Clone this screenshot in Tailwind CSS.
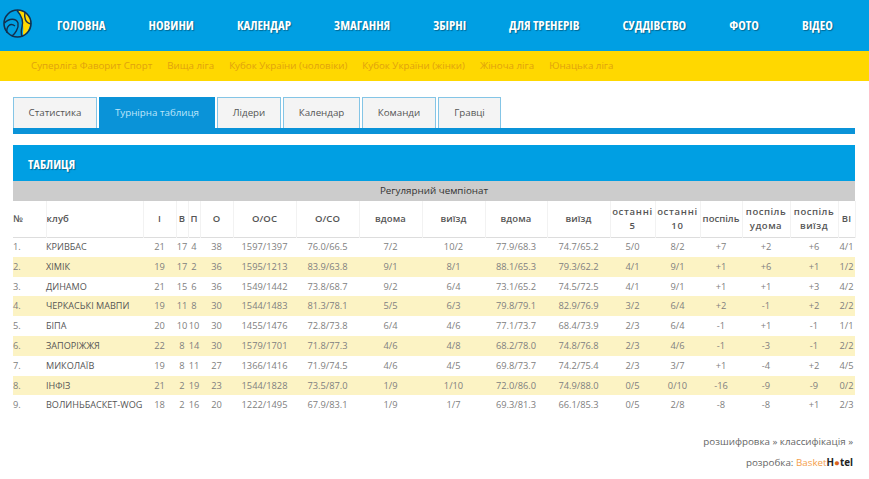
<!DOCTYPE html>
<html lang="uk">
<head>
    <meta charset="UTF-8">
    <title>Турнірна таблиця</title>
    <script src="https://cdn.jsdelivr.net/npm/@tailwindcss/browser@4"></script>
</head>
<body class="bg-white font-['Open_Sans',sans-serif] overflow-hidden">
    <!-- Main nav -->
    <header class="h-[51px] bg-[#009fe3] flex items-center relative">
        <svg class="absolute left-[3px] top-[9px] w-[29px] h-[29px]" viewBox="0 0 29 29">
            <path d="M15 1 C21 2 26 5 27 10 C28 16 26 23 20 27 C20 22 21 17 19 11 C18 7 16 4 15 1Z" fill="#ffd800"/>
            <circle cx="14.5" cy="14.5" r="13.5" fill="none" stroke="#12304f" stroke-width="1.6"/>
            <path d="M1.5 14 C6 9 13 9 15 14 C16 19 12 25 9 27 M4 24 C3 18 7 13 12 17 M14 1.5 C18 6 21 11 19 18 C18 22 18 25 19 27.5 M22 3 C21 8 22 14 28 15" fill="none" stroke="#12304f" stroke-width="1.4"/>
        </svg>
        <nav class="flex gap-[43px] pl-[57px] text-white font-bold text-[12.8px] [font-stretch:75%] [text-shadow:1px_1px_1px_rgba(0,0,0,0.35)] whitespace-nowrap">
            <a>ГОЛОВНА</a><a>НОВИНИ</a><a>КАЛЕНДАР</a><a>ЗМАГАННЯ</a><a>ЗБІРНІ</a><a>ДЛЯ ТРЕНЕРІВ</a><a>СУДДІВСТВО</a><a>ФОТО</a><a>ВІДЕО</a>
        </nav>
    </header>

    <!-- Sub nav -->
    <div class="h-[30px] bg-[#ffd800] flex items-center gap-[15px] pl-[31px] text-[9.75px] text-[#dfa20e] whitespace-nowrap">
        <a>Суперліга Фаворит Спорт</a><a>Вища ліга</a><a>Кубок України (чоловіки)</a><a>Кубок України (жінки)</a><a>Жіноча ліга</a><a>Юнацька ліга</a>
    </div>

    <main class="px-[13px] w-[855px] box-content pr-0">
        <!-- Tabs -->
        <div class="flex gap-[2px] mt-4 h-[31px] text-[9.75px] text-[#555] [&>a]:pt-[1px]">
            <a class="w-[84px] flex items-center justify-center bg-[#f4f4f4] border border-b-0 border-[#84c5e6]">Статистика</a>
            <a class="w-[116px] flex items-center justify-center bg-[#0a93d8] text-[#bfe6fa]">Турнірна таблиця</a>
            <a class="w-[64px] flex items-center justify-center bg-[#f4f4f4] border border-b-0 border-[#84c5e6]">Лідери</a>
            <a class="w-[77px] flex items-center justify-center bg-[#f4f4f4] border border-b-0 border-[#84c5e6]">Календар</a>
            <a class="w-[74px] flex items-center justify-center bg-[#f4f4f4] border border-b-0 border-[#84c5e6]">Команди</a>
            <a class="w-[63px] flex items-center justify-center bg-[#f4f4f4] border border-b-0 border-[#84c5e6]">Гравці</a>
        </div>
        <div class="h-[6px] w-[842px] bg-[#0a93d8]"></div>

        <!-- Table -->
        <div class="w-[842px] mt-[11px]">
            <h2 class="h-[36px] bg-[#009fe3] flex items-center pl-[15px] pt-[4px] text-white font-bold text-[12.5px] [font-stretch:75%] [text-shadow:1px_1px_1px_rgba(0,0,0,0.35)]">ТАБЛИЦЯ</h2>
            <div class="h-[20px] bg-[#cccccc] flex items-center justify-center text-[9.8px] text-[#333]">Регулярний чемпіонат</div>
            <table class="table-fixed w-[842px] border-collapse text-[9.3px] text-[#808080] text-center">
                <colgroup>
                    <col class="w-[33px]"><col class="w-[97px]"><col class="w-[33px]"><col class="w-[12px]"><col class="w-[12px]"><col class="w-[33px]"><col class="w-[63px]"><col class="w-[63px]"><col class="w-[63px]"><col class="w-[63px]"><col class="w-[62px]"><col class="w-[63px]"><col class="w-[45px]"><col class="w-[45px]"><col class="w-[42px]"><col class="w-[48px]"><col class="w-[48px]"><col class="w-[17px]">
                </colgroup>
                <thead class="text-[#555] text-[9.5px] tracking-[0.1px] leading-[14px]">
                    <tr class="h-[36px] border-b border-[#ddd] [&>th]:border-r [&>th]:border-[#f2f2f2] [&>th]:font-semibold [&>th]:p-0 [&>th]:overflow-hidden">
                        <th class="text-left">№</th><th class="text-left">клуб</th><th>І</th><th>В</th><th>П</th><th>О</th><th>О/ОС</th><th>О/СО</th><th>вдома</th><th>виїзд</th><th>вдома</th><th>виїзд</th><th class="tracking-[0.7px]">останні 5</th><th class="tracking-[0.7px]">останні 10</th><th class="tracking-[0px]">поспіль</th><th class="tracking-[0.5px]">поспіль удома</th><th class="tracking-[0.5px]">поспіль виїзд</th><th>ВІ</th>
                    </tr>
                </thead>
                <tbody class="[&>tr]:h-[19.8px] [&_td]:p-0 [&_td]:whitespace-nowrap [&_td:nth-child(1)]:text-left [&_td:nth-child(2)]:text-left [&_td:nth-child(2)]:text-[#555] [&_td:nth-child(2)]:text-[9.1px] [&>tr:nth-child(even)]:bg-[#fcf3c4]">
                    <tr><td>1.</td><td>КРИВБАС</td><td>21</td><td>17</td><td>4</td><td>38</td><td>1597/1397</td><td>76.0/66.5</td><td>7/2</td><td>10/2</td><td>77.9/68.3</td><td>74.7/65.2</td><td>5/0</td><td>8/2</td><td>+7</td><td>+2</td><td>+6</td><td>4/1</td></tr>
                    <tr><td>2.</td><td>ХІМІК</td><td>19</td><td>17</td><td>2</td><td>36</td><td>1595/1213</td><td>83.9/63.8</td><td>9/1</td><td>8/1</td><td>88.1/65.3</td><td>79.3/62.2</td><td>4/1</td><td>9/1</td><td>+1</td><td>+6</td><td>+1</td><td>1/2</td></tr>
                    <tr><td>3.</td><td>ДИНАМО</td><td>21</td><td>15</td><td>6</td><td>36</td><td>1549/1442</td><td>73.8/68.7</td><td>9/2</td><td>6/4</td><td>73.1/65.2</td><td>74.5/72.5</td><td>4/1</td><td>9/1</td><td>+1</td><td>+1</td><td>+3</td><td>4/2</td></tr>
                    <tr><td>4.</td><td>ЧЕРКАСЬКІ МАВПИ</td><td>19</td><td>11</td><td>8</td><td>30</td><td>1544/1483</td><td>81.3/78.1</td><td>5/5</td><td>6/3</td><td>79.8/79.1</td><td>82.9/76.9</td><td>3/2</td><td>6/4</td><td>+2</td><td>-1</td><td>+2</td><td>2/2</td></tr>
                    <tr><td>5.</td><td>БІПА</td><td>20</td><td>10</td><td>10</td><td>30</td><td>1455/1476</td><td>72.8/73.8</td><td>6/4</td><td>4/6</td><td>77.1/73.7</td><td>68.4/73.9</td><td>2/3</td><td>6/4</td><td>-1</td><td>+1</td><td>-1</td><td>1/1</td></tr>
                    <tr><td>6.</td><td>ЗАПОРІЖЖЯ</td><td>22</td><td>8</td><td>14</td><td>30</td><td>1579/1701</td><td>71.8/77.3</td><td>4/6</td><td>4/8</td><td>68.2/78.0</td><td>74.8/76.8</td><td>2/3</td><td>4/6</td><td>-1</td><td>-3</td><td>-1</td><td>2/2</td></tr>
                    <tr><td>7.</td><td>МИКОЛАЇВ</td><td>19</td><td>8</td><td>11</td><td>27</td><td>1366/1416</td><td>71.9/74.5</td><td>4/6</td><td>4/5</td><td>69.8/73.7</td><td>74.2/75.4</td><td>2/3</td><td>3/7</td><td>+1</td><td>-4</td><td>+2</td><td>4/5</td></tr>
                    <tr><td>8.</td><td>ІНФІЗ</td><td>21</td><td>2</td><td>19</td><td>23</td><td>1544/1828</td><td>73.5/87.0</td><td>1/9</td><td>1/10</td><td>72.0/86.0</td><td>74.9/88.0</td><td>0/5</td><td>0/10</td><td>-16</td><td>-9</td><td>-9</td><td>0/2</td></tr>
                    <tr><td>9.</td><td>ВОЛИНЬБАСКЕТ-WOG</td><td>18</td><td>2</td><td>16</td><td>20</td><td>1222/1495</td><td>67.9/83.1</td><td>1/9</td><td>1/7</td><td>69.3/81.3</td><td>66.1/85.3</td><td>0/5</td><td>2/8</td><td>-8</td><td>-8</td><td>+1</td><td>2/3</td></tr>
                </tbody>
            </table>

            <!-- Footer links -->
            <div class="mt-[20px] pr-[2px] text-right text-[9.8px] text-[#666] leading-[14px]">розшифровка » классифікація »</div>
            <div class="mt-[7px] pr-[2px] text-right text-[9.8px] text-[#666] leading-[14px]">розробка: <span class="text-[#f5a04c]">Basket</span><span class="font-bold text-[#222]">H<span class="text-[#d9641e]">●</span>tel</span></div>
        </div>
    </main>
</body>
</html>
